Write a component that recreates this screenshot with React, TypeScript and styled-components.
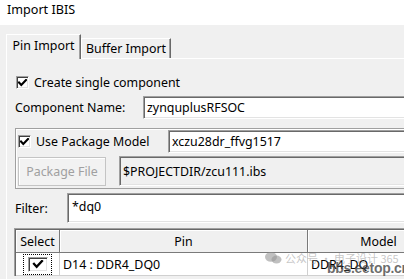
import React from 'react';
import styled, { createGlobalStyle } from 'styled-components';

const GlobalStyle = createGlobalStyle`
  html, body { margin: 0; padding: 0; background: #f0f0f0; }
  * { box-sizing: border-box; }
  body { font-family: "Noto Sans", "Open Sans", sans-serif; }
`;

const Window = styled.div`
  position: relative;
  width: 404px;
  height: 279px;
  overflow: hidden;
  background: #f0f0f0;
  color: #000;
  font-size: 12.4px;
`;

const TitleBar = styled.div`
  height: 25px;
  padding-left: 7px;
  background: #fff;
  line-height: 19px;
  font-size: 12.6px;
`;

const TabStrip = styled.div`
  position: relative;
  z-index: 1;
  display: flex;
  align-items: flex-end;
  height: 24px;
  margin: 9px 0 0 6px;
`;

const Tab = styled.div<{ $active?: boolean; $w: number }>`
  display: flex;
  align-items: center;
  justify-content: center;
  width: ${p => p.$w}px;
  height: ${p => (p.$active ? 25 : 20)}px;
  margin-bottom: ${p => (p.$active ? -1 : 0)}px;
  padding-bottom: ${p => (p.$active ? 3 : 0)}px;
  background: #f0f0f0;
  border-top: 1px solid #fff;
  border-left: 1px solid #fff;
  border-right: 1px solid #696969;
  box-shadow: inset -1px 0 0 #a0a0a0;
  white-space: nowrap;
`;

const Panel = styled.div`
  width: 480px;
  margin-left: 6px;
  padding-bottom: 20px;
  border-top: 1px solid #fff;
  border-left: 1px solid #fff;
`;

const Row = styled.div<{ $top: number; $left?: number; $h: number }>`
  display: flex;
  align-items: center;
  height: ${p => p.$h}px;
  margin-top: ${p => p.$top}px;
  padding-left: ${p => p.$left ?? 0}px;
  white-space: nowrap;
`;

const Label = styled.span<{ $w?: number }>`
  flex: none;
  width: ${p => (p.$w ? `${p.$w}px` : 'auto')};
`;

const CheckLabel = styled.label<{ $w?: number }>`
  display: flex;
  align-items: center;
  gap: 5px;
  width: ${p => (p.$w ? `${p.$w}px` : 'auto')};
  flex: none;
`;

const Box = styled.span<{ $w?: number; $h?: number }>`
  display: inline-flex;
  align-items: center;
  justify-content: center;
  flex: none;
  width: ${p => p.$w ?? 13}px;
  height: ${p => p.$h ?? 13}px;
  background: #fff;
  border-top: 1px solid #a0a0a0;
  border-left: 1px solid #a0a0a0;
  border-right: 1px solid #fff;
  border-bottom: 1px solid #fff;
  box-shadow: inset 1px 1px 0 #404040, inset -1px -1px 0 #e3e3e3;
`;

const TextBox = styled.div<{ $h: number; $readOnly?: boolean; $top?: boolean }>`
  display: flex;
  align-items: ${p => (p.$top ? 'flex-start' : 'center')};
  flex: 1;
  height: ${p => p.$h}px;
  padding: ${p => (p.$top ? '4px 0 0 4px' : '0 0 0 3px')};
  background: ${p => (p.$readOnly ? '#f0f0f0' : '#fff')};
  border-top: 1px solid #a0a0a0;
  border-left: 1px solid #a0a0a0;
  border-bottom: 1px solid #fff;
  box-shadow: inset 1px 1px 0 #696969, inset 0 -1px 0 #e3e3e3;
`;

const Group = styled.div`
  display: flex;
  flex-direction: column;
  height: 61px;
  margin: 9px 0 0 8px;
  padding: 1px 0 0 2px;
  border: 1px solid #a0a0a0;
  box-shadow: inset 1px 1px 0 #fff;
`;

const Button = styled.div`
  display: flex;
  align-items: center;
  justify-content: center;
  flex: none;
  width: 88px;
  height: 29px;
  margin-right: 13px;
  color: #a0a0a0;
  background: #f2f2f2;
  border: 1px solid #c4c4c4;
  box-shadow: inset 1px 1px 0 #fff;
`;

const Table = styled.div`
  width: 460px;
  margin: 5px 0 0 7px;
  border-top: 1px solid #a0a0a0;
  border-left: 1px solid #a0a0a0;
  box-shadow: inset 1px 1px 0 #696969;
  padding: 1px 0 0 1px;
`;

const TableRow = styled.div`
  display: grid;
  grid-template-columns: 44px 248px 142px;
`;

const HeadCell = styled.div`
  display: flex;
  align-items: center;
  justify-content: center;
  height: 23px;
  background: #f0f0f0;
  border-right: 1px solid #7a7a7a;
  border-bottom: 1px solid #7a7a7a;
  box-shadow: inset 1px 1px 0 #fff;
`;

const Cell = styled.div<{ $center?: boolean }>`
  display: flex;
  align-items: center;
  justify-content: ${p => (p.$center ? 'center' : 'flex-start')};
  height: 23px;
  padding-left: ${p => (p.$center ? 0 : 3)}px;
  background: #fff;
  border-right: 1px solid #d0d0d0;
  border-bottom: 1px solid #d0d0d0;
  white-space: nowrap;
`;

const Focus = styled.span`
  display: flex;
  align-items: center;
  justify-content: center;
  width: 29px;
  height: 21px;
  margin-top: 1px;
  border: 1px dotted #000;
`;

const Watermark = styled.div`
  position: absolute;
  left: 265px;
  top: 251px;
  display: flex;
  align-items: center;
  gap: 3px;
  color: rgba(150, 150, 150, 0.55);
  font-family: "Noto Sans CJK SC", "Noto Sans", sans-serif;
  font-size: 11px;
  line-height: 14px;
  white-space: nowrap;
`;

const Site = styled.div`
  position: absolute;
  left: 327px;
  top: 259px;
  color: rgba(60, 60, 60, 0.75);
  font-family: "Liberation Sans", sans-serif;
  font-size: 14px;
  line-height: 18px;
  font-weight: bold;
  letter-spacing: -0.3px;
`;

const Check = ({ big }: { big?: boolean }) => (
  <svg width={big ? 12 : 9} height={big ? 9 : 8} viewBox="0 0 9 8">
    <path d="M1 3.5 L3.3 6 L8 1" fill="none" stroke="#000" strokeWidth="2.1" strokeLinecap="square" />
  </svg>
);

export default function App() {
  return (
    <Window>
      <GlobalStyle />
      <TitleBar>Import IBIS</TitleBar>
      <TabStrip>
        <Tab $active $w={75}>Pin Import</Tab>
        <Tab $w={90}>Buffer Import</Tab>
      </TabStrip>
      <Panel>
        <Row $top={17} $left={9} $h={13}>
          <CheckLabel>
            <Box><Check /></Box>
            Create single component
          </CheckLabel>
        </Row>
        <Row $top={7} $left={8} $h={23}>
          <Label $w={128}>Component Name:</Label>
          <TextBox $h={23}>zynquplusRFSOC</TextBox>
        </Row>
        <Group>
          <Row $top={0} $h={23}>
            <CheckLabel $w={150}>
              <Box><Check /></Box>
              Use Package Model
            </CheckLabel>
            <TextBox $h={23}>xczu28dr_ffvg1517</TextBox>
          </Row>
          <Row $top={3} $h={30}>
            <Button>Package File</Button>
            <TextBox $h={30} $readOnly>$PROJECTDIR/zcu111.ibs</TextBox>
          </Row>
        </Group>
        <Row $top={4} $left={8} $h={30}>
          <Label $w={52}>Filter:</Label>
          <TextBox $h={30} $top>*dq0</TextBox>
        </Row>
        <Table>
          <TableRow>
            <HeadCell>Select</HeadCell>
            <HeadCell>Pin</HeadCell>
            <HeadCell>Model</HeadCell>
          </TableRow>
          <TableRow>
            <Cell $center>
              <Focus>
                <Box $w={20} $h={15}><Check big /></Box>
              </Focus>
            </Cell>
            <Cell>D14 : DDR4_DQ0</Cell>
            <Cell>DDR4_DQ</Cell>
          </TableRow>
        </Table>
      </Panel>
      <Watermark>
        <svg width="17" height="12" viewBox="0 0 17 12">
          <ellipse cx="6" cy="5" rx="6" ry="4.8" fill="rgba(150,150,150,0.6)" />
          <ellipse cx="11.5" cy="7.5" rx="5" ry="4" fill="rgba(150,150,150,0.6)" />
        </svg>
        <span>公众号 · 电子设计 365</span>
      </Watermark>
      <Site>bbs.eetop.cn</Site>
    </Window>
  );
}
